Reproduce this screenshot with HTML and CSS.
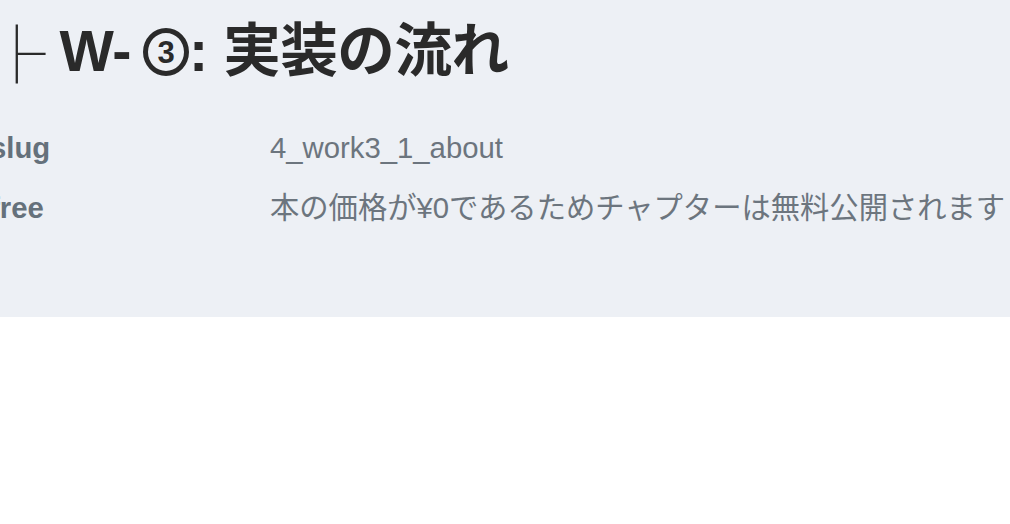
FILE: index.html
```html
<!DOCTYPE html>
<html lang="ja">
<head>
<meta charset="utf-8">
<link rel="stylesheet" href="styles.css">
</head>
<body>
<section class="chapter-head">
  <h1 class="title"><span class="tree">├</span><span class="title-text">W-</span><span class="circled" aria-label="③">3</span><span class="title-text">: 実装の流れ</span></h1>
  <dl class="meta">
    <dt class="label">slug</dt>
    <dd class="value">4_work3_1_about</dd>
    <dt class="label">free</dt>
    <dd class="value">本の価格が¥0であるためチャプターは無料公開されます</dd>
  </dl>
</section>
</body>
</html>
```
FILE: styles.css
```css
html, body {
  margin: 0;
  padding: 0;
  background: #ffffff;
}
body {
  width: 1010px;
  height: 524px;
  overflow: hidden;
  font-family: "Liberation Sans", "Noto Sans CJK JP", sans-serif;
}
.chapter-head {
  background: #edf0f5;
  height: 317px;
  box-sizing: border-box;
  padding-top: 20px;
  overflow: hidden;
}
.title {
  margin: 0 0 0 -12px;
  display: flex;
  align-items: center;
  height: 62px;
  font-size: 57.6px;
  line-height: 62px;
  font-weight: 700;
  color: #2a2a2a;
  white-space: nowrap;
}
.tree {
  font-family: "Noto Sans CJK JP", sans-serif;
  font-weight: 300;
  margin-right: 14px;
}
.title-text {
  letter-spacing: -0.5px;
}
.circled {
  display: inline-flex;
  align-items: center;
  justify-content: center;
  box-sizing: border-box;
  width: 46px;
  height: 48px;
  margin: 2px 0 0 12px;
  border: 5.5px solid #2a2a2a;
  border-radius: 50%;
  font-family: "Liberation Sans", sans-serif;
  font-size: 31px;
  line-height: 1;
  font-weight: 700;
}
.meta {
  margin: 44px 0 0 -10px;
  display: grid;
  grid-template-columns: 280px 1fr;
  grid-auto-rows: 60px;
  font-size: 29.3px;
  line-height: 43px;
  white-space: nowrap;
}
.label {
  font-weight: 700;
  color: #65717b;
}
.value {
  margin: 0;
  color: #6c757e;
}
```
